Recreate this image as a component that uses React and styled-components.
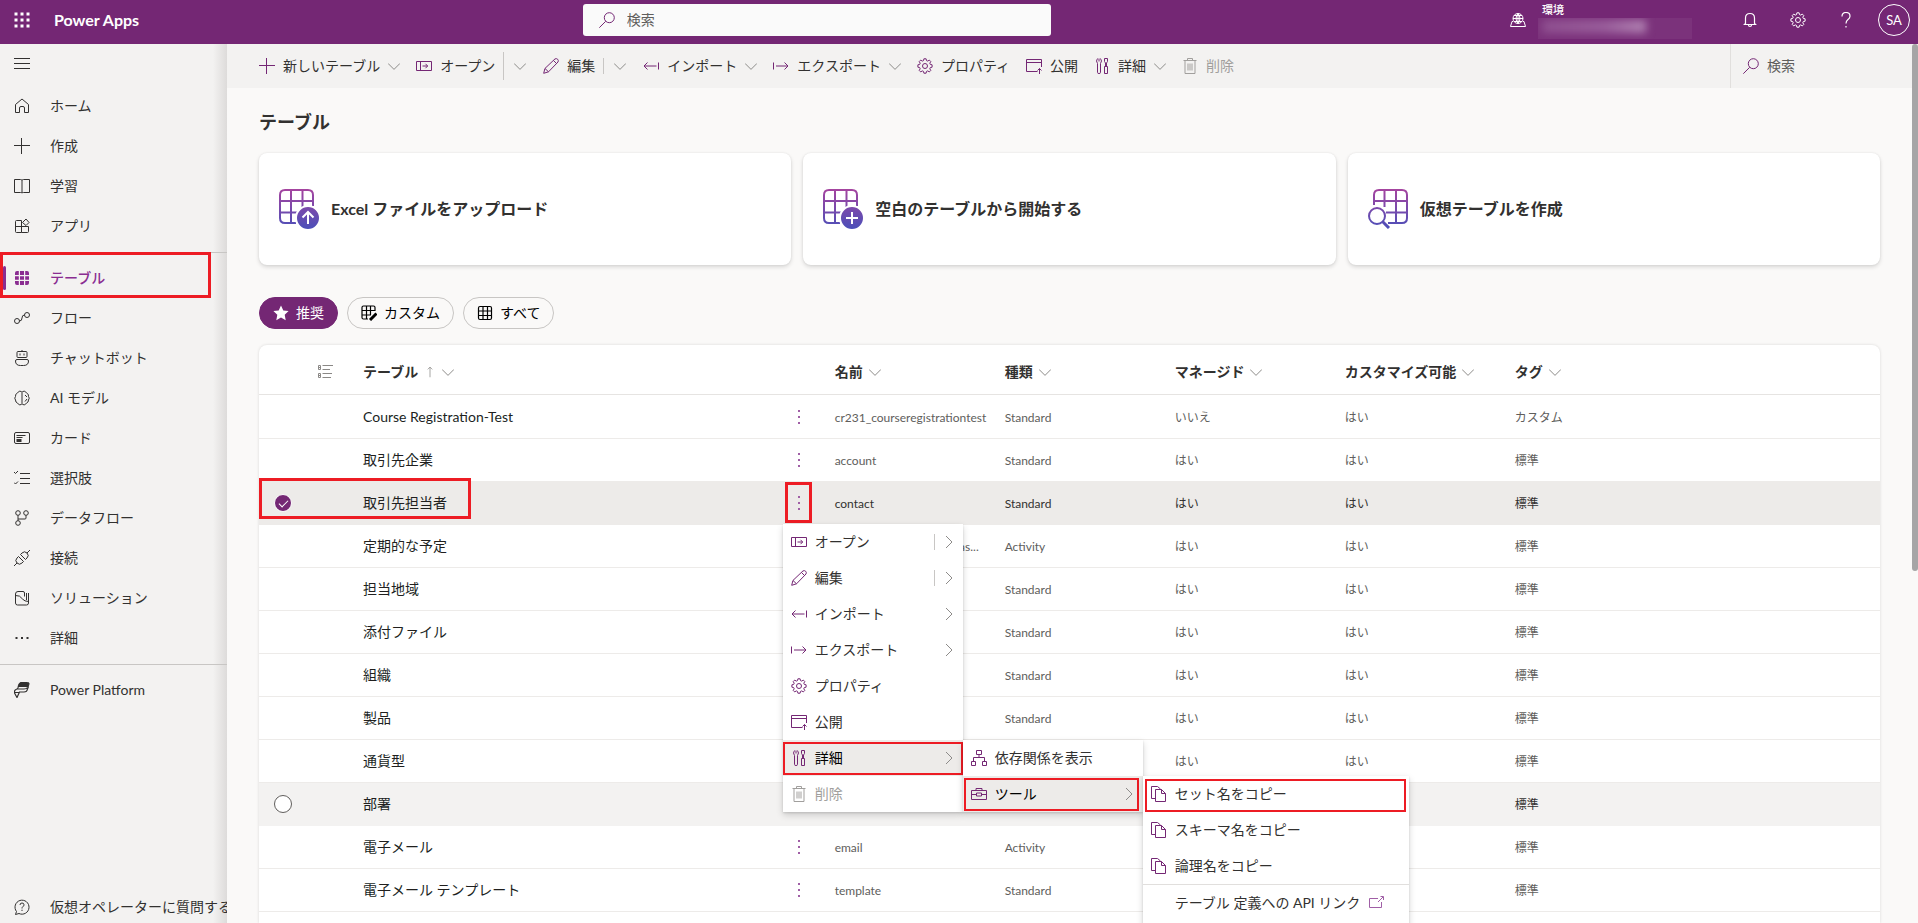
import { Fragment } from "react";
import styled, { createGlobalStyle, css } from "styled-components";

const purple = "#742774";
const accent = "#8a2d91";

const GlobalStyle = createGlobalStyle`
  * {
    box-sizing: border-box;
  }

  body {
    margin: 0;
    background: #faf9f8;
    color: #323130;
    font-family: Lato, "Noto Sans CJK JP", sans-serif;
    font-size: 14px;
    line-height: 20px;
  }

  button,
  input {
    font: inherit;
    color: inherit;
  }

  button {
    background: none;
    border: 0;
    padding: 0;
  }

  a {
    color: inherit;
    text-decoration: none;
  }
`;

/* ---------- icons ---------- */

const Svg = styled.svg`
  flex: none;
  width: ${(p) => p.$size || 16}px;
  height: ${(p) => p.$size || 16}px;
  fill: none;
  stroke: currentColor;
  stroke-width: 1;
`;

const gearPath =
  "M6.9 .8h2.2l.4 1.8 1.2.5 1.6-1 1.5 1.5-1 1.6.5 1.2 1.8.4v2.4l-1.8.4-.5 1.2 1 1.6-1.5 1.5-1.6-1-1.2.5-.4 1.8H6.9l-.4-1.8-1.2-.5-1.6 1-1.5-1.5 1-1.6-.5-1.2-1.8-.4V6.800l1.800-.4.5-1.200-1-1.600 1.500-1.500 1.600 1 1.200-.5z";

const icons = {
  menu: <path d="M0 2.500h16M0 7.500h16M0 12.500h16" />,
  home: <path d="M1.500 6.500 8 1l6.500 5.500v8h-4V10q0-1.500-1.500-1.500H7Q5.500 8.500 5.500 10v4.500h-4z" strokeLinejoin="round" />,
  plus: <path d="M0 7.500h16M7.500 0v16" />,
  book: <path d="M.5 1.500h6q1 0 1.500.8.5-.8 1.500-.8h6v13h-6q-1 0-1.500.5-.5-.5-1.500-.5h-6zM8 2v13" />,
  apps: <path d="M1.500 3.500Q1.500 2.500 2.500 2.500h5v12h-5q-1 0-1-1zM1.500 8.500h13v5q0 1-1 1h-6M12 1l3 3.500-3 3-3.500-3z" />,
  tableSolid: (
    <path
      d="M3 1h1.800v4H1V3q0-2 2-2zM6 1h4v4H6zM11.200 1H13q2 0 2 2v2h-3.800zM1 6.200h3.800v3.600H1zM6 6.200h4v3.600H6zM11.200 6.200H15v3.600h-3.800zM1 11h3.800v4H3q-2 0-2-2zM6 11h4v4H6zM11.200 11H15v2q0 2-2 2h-1.800z"
      fill="currentColor"
      stroke="none"
    />
  ),
  flow: (
    <>
      <circle cx="3" cy="11" r="2.500" />
      <circle cx="13" cy="5" r="2.500" />
      <path d="M5.500 11Q8 11 8 8t2.500-3" />
    </>
  ),
  bot: (
    <>
      <rect x="3" y="1.500" width="10" height="6" rx="1" />
      <path d="M8 0v1.500M6 3.500v2M10 3.500v2M3 9.500h10q1.500 0 1.500 1.500 0 4.500-5 4.500h-3q-5 0-5-4.500 0-1.500 1.500-1.500z" />
    </>
  ),
  brain: (
    <path d="M8 1.500v13M7.500 1.500Q5 0 3.500 3 1 4 1.500 6.500 0 8 1.500 10q0 2.500 2 3 1.500 3 4 1.500M8.500 1.500q2.500-1.500 4 1.500 2.500 1 2 3.500 1.500 1.500 0 3.500 0 2.500-2 3-1.500 3-4 1.500M11 5l2 2M13 9l-2 2.500" />
  ),
  card: (
    <>
      <rect x=".5" y="2.500" width="15" height="11" rx="1.500" />
      <path d="M2.500 5.500h9M2.500 7.500h6" />
      <path d="M2.500 9h5v3h-5z" fill="currentColor" stroke="none" />
    </>
  ),
  choices: <path d="M6 3.500h10M6 8.500h10M6 13.500h10M0 2l1.500 1.500L4 1M0 12.500 1.500 14 4 11.500" />,
  dataflow: (
    <>
      <circle cx="4" cy="3" r="2.300" />
      <circle cx="12" cy="3" r="2.300" />
      <circle cx="4" cy="13" r="2.300" />
      <path d="M4 5.300v5.400M12 5.300V8q0 1-1 1H4" />
    </>
  ),
  plug: (
    <path d="M0 16l3-3M13 3l3-3M3 13q-2.500-2.500 0-5l1.500-1.500 5 5L8 13q-2.500 2.500-5 0zM13 3q2.500 2.500 0 5l-1.500 1.500-5-5L8 3q2.500-2.500 5 0z" />
  ),
  solution: (
    <path d="M10.500 6.500V3q0-1.500-1.500-1.500H4Q1.500 1.500 1.500 4v9q0 2 2 2h9q2 0 2-2V3M1.500 5.500Q6 5 8.500 9q2 2.500 6 2.500M12.500 3v7" />
  ),
  ellipsis: <path d="M1.500 8h2M7 8h2M12.500 8h2" strokeWidth="2" />,
  platform: (
    <>
      <path d="M5 2Q5.500.5 7 .5h6.500q2 0 1.500 1.500l-.7 2.500H4z" fill="currentColor" />
      <path d="M4.500 4.500q-.5 2.500-2.500 3-2 1-1.500 3.500L3 15.500 5.500 10H10q3 0 3.500-3l1-2.500M3.500 7H10q2.500 0 3.500-1.500M1 10.500h4.500" strokeWidth="1.200" />
    </>
  ),
  ask: (
    <path d="M2.500 12.500A7 7 0 1 1 5 14.500L1.500 15.500zM6 6q0-2 2-2t2 1.800Q10 7 8.800 7.800 8 8.300 8 9.500M8 10.700v1.300" />
  ),
  open: <path d="M.5 3.500h15v9H.5zM4.500 3.500v9M6.500 8h5M9.500 5.800 11.700 8 9.500 10.200" />,
  edit: <path d="M.7 15.300l1.200-4.800L12 .9Q13.500.2 14.700 1.300 15.800 2.500 15 4L5.500 13.800zM2 10.500l3.500 3.300M10.500 2.500l3.200 3.200" />,
  import: <path d="M15.500 4.500v7M1 8h12.500M4.500 4.500 1 8l3.500 3.500" />,
  export: <path d="M.5 4.500v7M3 8h12M11.500 4.500 15 8l-3.500 3.500" />,
  gear: (
    <>
      <path d={gearPath} />
      <circle cx="8" cy="8" r="2.500" />
    </>
  ),
  publish: <path d="M15.500 9V1.500H.5v12h11M.5 4.500h15M13.500 16v-5.500M11.500 12.500l2-2 2 2" />,
  tools: (
    <path d="M5 .5v3M3.500.5q-2 2.500 0 5v9q0 1 1.500 1t1.500-1v-9q2-2.500 0-5M10.500.5h3v3l-1 1.500v3.500M11.500 8.500V5l-1-1.500v-3M10.500 8.500h3v7h-3z" />
  ),
  trash: <path d="M1.500 2.500h13M5.500 2.500v-2h5v2M3 2.500v13h10v-13M6 5.500v7M8 5.500v7M10 5.500v7" />,
  search: (
    <>
      <circle cx="10.300" cy="5.700" r="5" />
      <path d="M6.700 9.300.3 15.700" />
    </>
  ),
  chevronDown: <path d="M0 4.500l8 8 8-8" strokeWidth="1.300" />,
  chevronRight: <path d="M4 0l8 8-8 8" strokeWidth="1.300" />,
  tree: <path d="M5.500.5h5v4h-5zM.5 11.500h4v4h-4zM11.500 11.500h4v4h-4zM8 4.500v3M2.500 11.500v-4h11v4" />,
  toolbox: <path d="M.5 4.500h15v9H.5zM5 4.500v-2h6v2M.5 8.500h5M10.500 8.500h5M5.500 7h5v3h-5z" />,
  copy: <path d="M4.500 12.500h-4V.5h6l3 2.500M4.500 3.500h6l4 4v8h-10zM10.500 3.500v4h4" />,
  external: <path d="M10 3.500H1.500v9h12V7M10 7l5-5M12.500 1.500h3V5" stroke="#a05fa6" />,
  star: (
    <path
      d="M8 .5l2.300 4.900 5.300.7-3.900 3.700 1 5.400L8 12.600l-4.700 2.600 1-5.400L.4 6.100l5.300-.7z"
      fill="currentColor"
      stroke="none"
    />
  ),
  grid: <path d="M3 1.500h10q1.500 0 1.500 1.500v10q0 1.500-1.500 1.500H3q-1.500 0-1.500-1.500V3Q1.500 1.500 3 1.500zM1.500 6h13M1.500 10.500h13M6 1.500v13M10.500 1.500v13" strokeWidth="1.200" />,
  gridEdit: (
    <>
      <path d="M7 14H2.500Q1 14 1 12.500v-10Q1 1 2.500 1h10Q14 1 14 2.500V6M1 5.500h13M1 10h9M5.500 1v13M9.500 1v9" strokeWidth="1.200" />
      <path d="M15.500 8.500 9 15" strokeWidth="3" />
    </>
  ),
  list: (
    <>
      <path d="M4.500 1.500H15M4.500 5.500H12M4.500 9.500H14M4.500 13.500H13" />
      <path d="M.5 1.500h2v4h-2zM.5 9.500h2v4h-2zM.5 3.500h2M.5 11.500h2" />
    </>
  ),
  up: <path d="M8 15V1.500M5 4.500l3-3 3 3" />,
  dots: <path d="M7 1h2v2H7zM7 7h2v2H7zM7 13h2v2H7z" fill="#a05fa6" stroke="none" />,
  waffle: (
    <path
      d="M0 0h4v4H0zM6 0h4v4H6zM12 0h4v4h-4zM0 6h4v4H0zM6 6h4v4H6zM12 6h4v4h-4zM0 12h4v4H0zM6 12h4v4H6zM12 12h4v4h-4z"
      fill="currentColor"
      stroke={purple}
    />
  ),
  environment: (
    <>
      <circle cx="8" cy="6.500" r="5" />
      <path d="M3 6.500h10M4 3.500h8M4 9.500h8M8 1.500v10M8 1.500q-4 5 0 10M8 1.500q4 5 0 10M3 9.500h-1L.5 14.500h15L14 9.500h-1" />
    </>
  ),
  bell: <path d="M3.500 11.500V6Q3.500 1.500 8 1.500T12.500 6v5.500l1 1h-11zM6.500 13q0 1.500 1.500 1.500T9.500 13" strokeWidth="1.200" />,
  help: <path d="M4 4.500Q4 .5 8 .5t4 3.700q0 1.800-2 3.300T8 11.500M8 14v1.500" strokeWidth="1.200" />,
};

const Icon = ({ name, size }) => (
  <Svg viewBox="0 0 16 16" $size={size} aria-hidden="true">
    {icons[name]}
  </Svg>
);

const CardSvg = styled.svg`
  flex: none;
  width: 40px;
  height: 40px;
  fill: none;
  stroke-width: 2;
`;

const CardIcon = ({ kind }) => {
  const stroke = `url(#grad-${kind})`;
  return (
    <CardSvg viewBox="0 0 40 40" stroke={stroke} aria-hidden="true">
      <defs>
        <linearGradient id={`grad-${kind}`} gradientUnits="userSpaceOnUse" x1="0" y1="0" x2="0" y2="40">
          <stop offset="0" stopColor="#a5449f" />
          <stop offset="1" stopColor="#4b4fb9" />
        </linearGradient>
      </defs>
      {kind === "virtual" ? (
        <>
          <path d="M6 16V6q0-5 5-5h23q5 0 5 5v23q0 5-5 5H20M6 12h33M18 23.500h21M16.500 1v17M28 1v33" />
          <circle cx="9" cy="27" r="8" />
          <path d="M14.500 32.500 21 39" strokeWidth="3" />
        </>
      ) : (
        <>
          <path d="M17 34H6q-5 0-5-5V6q0-5 5-5h23q5 0 5 5v11M1 12h33M1 23.500h18M12 1v33M23.500 1v17" />
          <circle cx="29" cy="29" r="12" fill={stroke} stroke="#fff" strokeWidth="2" />
          <path
            d={kind === "upload" ? "M29 35V23.500M23.500 28.500 29 23l5.500 5.500" : "M29 23v12M23 29h12"}
            stroke="#fff"
          />
        </>
      )}
    </CardSvg>
  );
};

/* ---------- header ---------- */

const Page = styled.div`
  display: flex;
  flex-direction: column;
  height: 100vh;
  overflow: hidden;
`;

const Header = styled.header`
  display: grid;
  grid-template-columns: 30% minmax(200px, 468px) 1fr;
  align-items: center;
  flex: none;
  height: 44px;
  padding: 0 8px 4px 14px;
  background: ${purple};
  color: #fff;
`;

const Brand = styled.div`
  display: flex;
  align-items: center;
  gap: 24px;
  font-size: 16px;
  font-weight: 700;
`;

const SearchField = styled.label`
  display: flex;
  align-items: center;
  gap: 12px;
  height: 32px;
  padding: 0 16px;
  border-radius: 3px;
  background: #fafafa;
  color: ${purple};
`;

const SearchInput = styled.input`
  flex: 1;
  min-width: 0;
  width: 100%;
  border: 0;
  padding: 0;
  background: none;
  outline: none;

  &::placeholder {
    color: #605e5c;
    opacity: 1;
  }
`;

const HeaderTools = styled.div`
  display: flex;
  align-items: center;
  justify-content: flex-end;
`;

const Environment = styled.div`
  display: flex;
  align-items: center;
  gap: 12px;
  margin-right: 34px;
`;

const EnvironmentText = styled.div`
  width: 154px;
  font-size: 11px;
  font-weight: 500;
  line-height: 16px;

  span {
    padding-left: 4px;
  }
`;

const EnvironmentName = styled.div`
  height: 21px;
  overflow: hidden;
  background: rgba(255, 255, 255, 0.05);

  &:before {
    content: "";
    display: block;
    width: 104px;
    height: 13px;
    margin: 2px 4px;
    background: linear-gradient(90deg, #8f5090, #9a5f9c 60%, #b284b3);
    filter: blur(4px);
  }
`;

const HeaderButton = styled.button`
  display: flex;
  align-items: center;
  justify-content: center;
  width: 48px;
  height: 40px;
  color: #fff;
`;

const Avatar = styled.button`
  width: 32px;
  height: 32px;
  margin-left: 8px;
  border: 1px solid #fff;
  border-radius: 50%;
  color: #fff;
  font-size: 13px;
`;

/* ---------- side navigation ---------- */

const Body = styled.div`
  display: flex;
  flex: 1;
  min-height: 0;
`;

const Sidebar = styled.nav`
  display: flex;
  flex-direction: column;
  flex: none;
  width: 227px;
  overflow: hidden;
  background: linear-gradient(270deg, #dddbda, #f3f2f1 14px);
`;

const navRow = css`
  position: relative;
  display: flex;
  align-items: center;
  flex: none;
  gap: 20px;
  width: 100%;
  height: 40px;
  padding-left: 14px;
  white-space: nowrap;
`;

const NavToggle = styled.button`
  ${navRow}
  margin-bottom: 2px;
`;

const NavLink = styled.a`
  ${navRow}

  ${(p) =>
    p.$active &&
    css`
      color: ${accent};
      font-weight: 500;

      &:before {
        content: "";
        position: absolute;
        left: 3px;
        top: 8px;
        bottom: 8px;
        width: 3px;
        border-radius: 2px;
        background: ${accent};
      }
    `}
`;

const NavFooter = styled.a`
  ${navRow}
  height: 32px;
  margin-top: auto;
`;

const NavDivider = styled.hr`
  width: 100%;
  margin: 6px 0 5px;
  border: 0;
  border-top: 1px solid #c8c6c4;
`;

const Highlight = styled.span`
  position: absolute;
  inset: ${(p) => p.$inset};
  z-index: 2;
  border: ${(p) => p.$weight || 2}px solid #ed1c24;
  pointer-events: none;
`;

/* ---------- command bar ---------- */

const Main = styled.main`
  display: flex;
  flex-direction: column;
  flex: 1;
  min-width: 0;
`;

const CommandBar = styled.div`
  display: flex;
  align-items: center;
  flex: none;
  height: 44px;
  padding-left: 24px;
  background: #f3f2f1;
  white-space: nowrap;
`;

const Command = styled.button`
  display: flex;
  align-items: center;
  gap: 8px;
  height: 40px;
  padding: 0 8px;

  > svg {
    color: ${purple};
  }

  > svg + span + svg {
    color: #8a8886;
  }

  &:disabled,
  &:disabled > svg {
    color: #a19f9d;
  }
`;

const SplitButton = styled.button`
  display: flex;
  align-items: center;
  justify-content: center;
  width: 32px;
  height: ${(p) => p.$height}px;
  border-left: 1px solid #c8c6c4;
  color: #8a8886;
`;

const CommandSearch = styled.label`
  display: flex;
  align-items: center;
  gap: 8px;
  width: 182px;
  height: 44px;
  margin-left: auto;
  padding-left: 12px;
  border-left: 1px solid #e1dfdd;
  color: ${purple};
`;

/* ---------- content ---------- */

const Content = styled.div`
  display: flex;
  flex-direction: column;
  flex: 1;
  min-height: 0;
  padding: 22px 32px 0;
`;

const Title = styled.h1`
  margin: 0 0 19px;
  font-size: 18px;
  font-weight: 700;
  line-height: 24px;
`;

const Cards = styled.div`
  display: grid;
  grid-template-columns: repeat(3, 1fr);
  gap: 12px;
  flex: none;
`;

const Card = styled.button`
  display: flex;
  align-items: center;
  gap: 12px;
  height: 112px;
  padding: 0 20px;
  border-radius: 8px;
  background: #fff;
  box-shadow: 0 2px 4px rgba(0, 0, 0, 0.14), 0 0 2px rgba(0, 0, 0, 0.08);
  font-size: 16px;
  font-weight: 700;
`;

const Pills = styled.div`
  display: flex;
  flex: none;
  gap: 9px;
  margin: 32px 0 16px;
`;

const Pill = styled.button`
  display: flex;
  align-items: center;
  gap: 7px;
  height: 32px;
  padding: 0 13px;
  border: 1px solid ${(p) => (p.$active ? purple : "#c8c6c4")};
  border-radius: 16px;
  background: ${(p) => (p.$active ? purple : "transparent")};
  color: ${(p) => (p.$active ? "#fff" : "#000")};
`;

const Panel = styled.div`
  flex: 1;
  border-radius: 8px 8px 0 0;
  background: #fff;
  box-shadow: 0 0 3px rgba(0, 0, 0, 0.14);
`;

const Table = styled.table`
  width: 100%;
  border-collapse: separate;
  border-spacing: 0;
  table-layout: fixed;
`;

const Col = styled.col`
  width: ${(p) => p.$width};
`;

const Th = styled.th`
  height: 50px;
  padding: 4px 4px 0 ${(p) => p.$indent ?? 20}px;
  border-bottom: 1px solid #e6e4e2;
  text-align: left;
  font-weight: 700;
`;

const HeadLabel = styled.span`
  display: flex;
  align-items: center;
  gap: 6px;

  > svg {
    color: #8a8886;
  }
`;

const Td = styled.td`
  position: relative;
  height: 43px;
  padding: 0 0 0 ${(p) => p.$indent ?? 20}px;
  border-bottom: 1px solid #edebe9;
  color: ${(p) => (p.$main ? "#201f1e" : "inherit")};
  font-size: ${(p) => (p.$main ? 14 : 12)}px;
  white-space: nowrap;

  tr:first-child > & {
    height: 44px;
  }
`;

const CellText = styled.div`
  padding-top: 2px;
`;

const Tr = styled.tr`
  color: ${(p) => (p.$background ? "#323130" : "#605e5c")};
  background: ${(p) => p.$background || "transparent"};

  ${(p) =>
    p.$background &&
    css`
      > td {
        border-color: ${p.$background};
      }
    `}
`;

const RowCheck = styled.input`
  display: block;
  appearance: none;
  position: relative;
  width: 18px;
  height: 18px;
  margin: 0 auto;
  border: 1px solid #605e5c;
  border-radius: 50%;
  background: #fff;
  opacity: ${(p) => (p.$shown ? 1 : 0)};

  &:checked {
    border-color: #fff;
    background: ${purple};
  }

  &:checked:after {
    content: "";
    position: absolute;
    left: 4px;
    top: 5px;
    width: 8px;
    height: 4px;
    border: solid #fff;
    border-width: 0 0 1px 1px;
    transform: rotate(-45deg);
  }
`;

const RowMenuButton = styled.button`
  display: flex;
  align-items: center;
  justify-content: center;
  width: 100%;
  height: 32px;
`;

/* ---------- context menu ---------- */

const Menu = styled.ul`
  position: absolute;
  top: ${(p) => (p.$nested ? "0" : "100%")};
  left: ${(p) => (p.$nested ? "100%" : "0")};
  z-index: 5;
  width: ${(p) => p.$width}px;
  margin: 0;
  padding: 0 0 ${(p) => p.$end || 0}px;
  list-style: none;
  background: #fff;
  box-shadow: 0 3px 7px rgba(0, 0, 0, 0.16), 0 1px 2px rgba(0, 0, 0, 0.12);
  color: #323130;
  font-size: 14px;
`;

const MenuItem = styled.li`
  position: relative;
  background: ${(p) => (p.$open ? "#edebe9" : "transparent")};
  color: ${(p) => (p.$open ? "#000" : "inherit")};
`;

const MenuDivider = styled.li`
  border-top: 1px solid #e1dfdd;
`;

const MenuButton = styled.button`
  display: flex;
  align-items: center;
  gap: 8px;
  width: 100%;
  height: 36px;
  padding: 0 8px;

  > svg {
    color: ${purple};
  }

  &:disabled,
  &:disabled > svg {
    color: #a19f9d;
  }
`;

const MenuArrow = styled.span`
  display: flex;
  align-items: center;
  height: 16px;
  margin-left: auto;
  padding-left: 8px;
  border-left: 1px solid ${(p) => (p.$split ? "#c8c6c4" : "transparent")};
  color: #8a8886;
`;

const MenuIndent = styled.span`
  width: 16px;
`;

/* ---------- page scroll bar ---------- */

const ScrollTrack = styled.div`
  flex: none;
  width: 6px;
  background: linear-gradient(#f3f2f1 44px, #faf9f8 44px);
`;

const ScrollThumb = styled.div`
  height: 60%;
  border-radius: 3px;
  background: #a6a5a6;
`;

const navTop = [
  ["home", "ホーム"],
  ["plus", "作成"],
  ["book", "学習"],
  ["apps", "アプリ"],
];

const navMiddle = [
  ["tableSolid", "テーブル"],
  ["flow", "フロー"],
  ["bot", "チャットボット"],
  ["brain", "AI モデル"],
  ["card", "カード"],
  ["choices", "選択肢"],
  ["dataflow", "データフロー"],
  ["plug", "接続"],
  ["solution", "ソリューション"],
  ["ellipsis", "詳細"],
];

const commands = [
  { icon: "plus", label: "新しいテーブル", arrow: true },
  { icon: "open", label: "オープン", split: 28 },
  { icon: "edit", label: "編集", split: 16 },
  { icon: "import", label: "インポート", arrow: true },
  { icon: "export", label: "エクスポート", arrow: true },
  { icon: "gear", label: "プロパティ" },
  { icon: "publish", label: "公開" },
  { icon: "tools", label: "詳細", arrow: true },
  { icon: "trash", label: "削除", disabled: true },
];

const rows = [
  ["Course Registration-Test", "cr231_courseregistrationtest", "Standard", "いいえ", "はい", "カスタム"],
  ["取引先企業", "account", "Standard", "はい", "はい", "標準"],
  ["取引先担当者", "contact", "Standard", "はい", "はい", "標準"],
  ["定期的な予定", "recurringappointmentmas...", "Activity", "はい", "はい", "標準"],
  ["担当地域", "territory", "Standard", "はい", "はい", "標準"],
  ["添付ファイル", "attachment", "Standard", "はい", "はい", "標準"],
  ["組織", "organization", "Standard", "はい", "はい", "標準"],
  ["製品", "product", "Standard", "はい", "はい", "標準"],
  ["通貨型", "currency", "Standard", "はい", "はい", "標準"],
  ["部署", "businessunit", "Standard", "はい", "はい", "標準"],
  ["電子メール", "email", "Activity", "はい", "はい", "標準"],
  ["電子メール テンプレート", "template", "Standard", "はい", "はい", "標準"],
];

const selectedRow = 2;
const hoveredRow = 9;

const rowBackground = (index) => {
  if (index === selectedRow) return "#edebe9";
  if (index === hoveredRow) return "#f3f2f1";
  return undefined;
};

const NavItem = ({ icon, label, active }) => (
  <NavLink href="#" $active={active}>
    <Icon name={icon} />
    {label}
    {active && <Highlight $inset="-6px 16px 0 0" $weight={3} />}
  </NavLink>
);

const MenuEntry = ({ icon, label, arrow, split, disabled, open, mark, children }) => (
  <MenuItem $open={open}>
    <MenuButton disabled={disabled}>
      {icon ? <Icon name={icon} /> : <MenuIndent />}
      <span>{label}</span>
      {!icon && <Icon name="external" />}
      {arrow && (
        <MenuArrow $split={split}>
          <Icon name="chevronRight" size={12} />
        </MenuArrow>
      )}
    </MenuButton>
    {mark && <Highlight $inset={mark} />}
    {children}
  </MenuItem>
);

const RowMenu = () => (
  <Menu $width={180}>
    <MenuEntry icon="open" label="オープン" arrow split />
    <MenuEntry icon="edit" label="編集" arrow split />
    <MenuEntry icon="import" label="インポート" arrow />
    <MenuEntry icon="export" label="エクスポート" arrow />
    <MenuEntry icon="gear" label="プロパティ" />
    <MenuEntry icon="publish" label="公開" />
    <MenuEntry icon="tools" label="詳細" arrow open mark="2px 0 1px 0">
      <Menu $nested $width={180}>
        <MenuEntry icon="tree" label="依存関係を表示" />
        <MenuEntry icon="toolbox" label="ツール" arrow open mark="2px 4px 1px 1px">
          <Menu $nested $width={266} $end={8}>
            <MenuEntry icon="copy" label="セット名をコピー" mark="3px 3px 0 2px" />
            <MenuEntry icon="copy" label="スキーマ名をコピー" />
            <MenuEntry icon="copy" label="論理名をコピー" />
            <MenuDivider />
            <MenuEntry label="テーブル 定義への API リンク" />
          </Menu>
        </MenuEntry>
      </Menu>
    </MenuEntry>
    <MenuEntry icon="trash" label="削除" disabled />
  </Menu>
);

const TableList = () => (
  <Panel>
    <Table>
      <colgroup>
        <Col $width="48px" />
        <Col $width="38px" />
        <Col $width="27%" />
        <Col $width="32px" />
        <Col $width="170px" />
        <Col $width="170px" />
        <Col $width="170px" />
        <Col $width="170px" />
        <Col />
      </colgroup>
      <thead>
        <tr>
          <Th />
          <Th $indent={11}>
            <HeadLabel>
              <Icon name="list" />
            </HeadLabel>
          </Th>
          <Th $indent={18}>
            <HeadLabel>
              テーブル
              <Icon name="up" size={12} />
              <Icon name="chevronDown" size={12} />
            </HeadLabel>
          </Th>
          <Th />
          {["名前", "種類", "マネージド", "カスタマイズ可能", "タグ"].map((label) => (
            <Th key={label}>
              <HeadLabel>
                {label}
                <Icon name="chevronDown" size={12} />
              </HeadLabel>
            </Th>
          ))}
        </tr>
      </thead>
      <tbody>
        {rows.map(([title, ...cells], index) => {
          const selected = index === selectedRow;
          return (
            <Tr key={title} $background={rowBackground(index)}>
              <Td $indent={0}>
                <RowCheck
                  type="checkbox"
                  aria-label={title}
                  defaultChecked={selected}
                  $shown={selected || index === hoveredRow}
                />
                {selected && <Highlight $inset="-4px -164px 5px 0" $weight={3} />}
              </Td>
              <Td />
              <Td $main $indent={18}>
                {title}
              </Td>
              <Td $indent={0}>
                <RowMenuButton aria-label="その他のコマンド">
                  <Icon name="dots" />
                </RowMenuButton>
                {selected && <Highlight $inset="0 3px 1px 2px" $weight={3} />}
                {selected && <RowMenu />}
              </Td>
              {cells.map((cell, i) => (
                <Td key={i}>
                  <CellText>{cell}</CellText>
                </Td>
              ))}
            </Tr>
          );
        })}
      </tbody>
    </Table>
  </Panel>
);

const App = () => {
  return (
    <Page>
      <GlobalStyle />
      <Header>
        <Brand>
          <Icon name="waffle" />
          Power Apps
        </Brand>
        <SearchField>
          <Icon name="search" />
          <SearchInput placeholder="検索" aria-label="検索" />
        </SearchField>
        <HeaderTools>
          <Environment>
            <Icon name="environment" />
            <EnvironmentText>
              <span>環境</span>
              <EnvironmentName />
            </EnvironmentText>
          </Environment>
          <HeaderButton aria-label="通知">
            <Icon name="bell" />
          </HeaderButton>
          <HeaderButton aria-label="設定">
            <Icon name="gear" />
          </HeaderButton>
          <HeaderButton aria-label="ヘルプ">
            <Icon name="help" />
          </HeaderButton>
          <Avatar>SA</Avatar>
        </HeaderTools>
      </Header>
      <Body>
        <Sidebar>
          <NavToggle aria-label="ナビゲーション">
            <Icon name="menu" />
          </NavToggle>
          {navTop.map(([icon, label]) => (
            <NavItem key={label} icon={icon} label={label} />
          ))}
          <NavDivider />
          {navMiddle.map(([icon, label], index) => (
            <NavItem key={label} icon={icon} label={label} active={index === 0} />
          ))}
          <NavDivider />
          <NavItem icon="platform" label="Power Platform" />
          <NavFooter href="#">
            <Icon name="ask" />
            仮想オペレーターに質問する
          </NavFooter>
        </Sidebar>
        <Main>
          <CommandBar>
            {commands.map(({ icon, label, arrow, split, disabled }) => (
              <Fragment key={label}>
                <Command disabled={disabled}>
                  <Icon name={icon} />
                  <span>{label}</span>
                  {arrow && <Icon name="chevronDown" size={12} />}
                </Command>
                {split && (
                  <SplitButton $height={split} aria-label={label}>
                    <Icon name="chevronDown" size={12} />
                  </SplitButton>
                )}
              </Fragment>
            ))}
            <CommandSearch>
              <Icon name="search" />
              <SearchInput placeholder="検索" aria-label="テーブルの検索" />
            </CommandSearch>
          </CommandBar>
          <Content>
            <Title>テーブル</Title>
            <Cards>
              <Card>
                <CardIcon kind="upload" />
                Excel ファイルをアップロード
              </Card>
              <Card>
                <CardIcon kind="blank" />
                空白のテーブルから開始する
              </Card>
              <Card>
                <CardIcon kind="virtual" />
                仮想テーブルを作成
              </Card>
            </Cards>
            <Pills>
              <Pill $active>
                <Icon name="star" />
                推奨
              </Pill>
              <Pill>
                <Icon name="gridEdit" />
                カスタム
              </Pill>
              <Pill>
                <Icon name="grid" />
                すべて
              </Pill>
            </Pills>
            <TableList />
          </Content>
        </Main>
        <ScrollTrack>
          <ScrollThumb />
        </ScrollTrack>
      </Body>
    </Page>
  );
};

export default App;
